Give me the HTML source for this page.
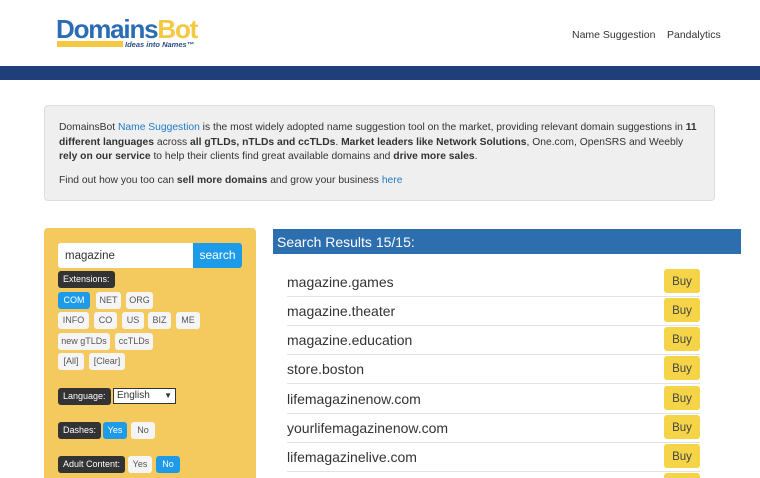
<!DOCTYPE html>
<html><head><style>
*{margin:0;padding:0;box-sizing:border-box}
html,body{width:760px;height:478px;overflow:hidden}
body{background:#fff;font-family:"Liberation Sans",sans-serif;color:#333;position:relative}
.abs{position:absolute}
.logo1{left:56px;top:14px;font-size:26px;font-weight:bold;letter-spacing:-1.2px;color:#2a6db5}
.logo1 span{color:#f5c842}
.bar{left:57px;top:41px;width:66px;height:6px;background:#f5c842}
.tag{left:125px;top:40px;font-size:7.5px;font-style:italic;font-weight:bold;color:#2a4f8a}
.nav{top:29px;font-size:10.5px;color:#333}
.band{left:0;top:66px;width:760px;height:14px;background:#1e3f7a}
.info{left:44px;top:105px;width:671px;height:96px;background:#efefef;border:1px solid #ddd;border-radius:4px;padding:15px 14px;font-size:10.3px;line-height:14.5px;color:#333}
.info a{color:#1e7ac8;text-decoration:none}
.panel{left:44px;top:228px;width:212px;height:260px;background:#f4c95d;border-radius:4px}
.inp{left:58px;top:243px;width:135px;height:25px;background:#fff;border-radius:3px 0 0 3px;font-size:11.5px;padding:7px 7px;color:#333}
.sbtn{left:193px;top:243px;width:49px;height:25px;background:#1e9be8;color:#fff;font-size:12px;text-align:center;line-height:25px;border-radius:0 3px 3px 0}
.lbl{background:#333;color:#fff;font-size:9px;height:17px;line-height:17px;padding:0 5px;border-radius:3px}
.b{height:17px;line-height:17px;font-size:9px;text-align:center;background:#f5f5f5;border-radius:3px;color:#555}
.on{background:#1e9be8;color:#fff}
.sel{left:113px;top:388px;width:63px;height:16px;background:#fff;border:1px solid #333;font-size:10px;line-height:14px;padding-left:3px}
.rh{left:273px;top:229px;width:468px;height:25px;background:#2d6fae;color:#fff;font-size:14px;line-height:26px;padding-left:4px}
.row{left:287px;width:413px;height:29px;border-bottom:1px solid #e3e3e3;font-size:14px;color:#333}
.row span{position:absolute;left:0;top:6px}
.buy{position:absolute;right:0;top:1px;width:36px;height:24px;background:#f5d547;border-radius:3px;font-size:11.5px;text-align:center;line-height:26px;color:#444}
</style></head><body>
<div class="abs logo1">Domains<span>Bot</span></div>
<div class="abs bar"></div>
<div class="abs tag">Ideas into Names™</div>
<div class="abs nav" style="left:572px">Name Suggestion</div>
<div class="abs nav" style="left:667px">Pandalytics</div>
<div class="abs band"></div>
<div class="abs info">DomainsBot <a>Name Suggestion</a> is the most widely adopted name suggestion tool on the market, providing relevant domain suggestions in <b>11 different languages</b> across <b>all gTLDs, nTLDs and ccTLDs</b>. <b>Market leaders like Network Solutions</b>, One.com, OpenSRS and Weebly <b>rely on our service</b> to help their clients find great available domains and <b>drive more sales</b>.<div style="height:9px"></div>Find out how you too can <b>sell more domains</b> and grow your business <a>here</a></div>
<div class="abs panel"></div>
<div class="abs inp">magazine</div>
<div class="abs sbtn">search</div>
<div class="abs lbl" style="left:58px;top:271px">Extensions:</div>
<div class="abs b on" style="left:58px;top:292px;width:32px">COM</div>
<div class="abs b" style="left:96px;top:292px;width:25px">NET</div>
<div class="abs b" style="left:126px;top:292px;width:27px">ORG</div>
<div class="abs b" style="left:58px;top:312px;width:31px">INFO</div>
<div class="abs b" style="left:94px;top:312px;width:23px">CO</div>
<div class="abs b" style="left:122px;top:312px;width:22px">US</div>
<div class="abs b" style="left:148px;top:312px;width:23px">BIZ</div>
<div class="abs b" style="left:176px;top:312px;width:24px">ME</div>
<div class="abs b" style="left:58px;top:333px;width:52px">new gTLDs</div>
<div class="abs b" style="left:115px;top:333px;width:38px">ccTLDs</div>
<div class="abs b" style="left:58px;top:353px;width:26px">[All]</div>
<div class="abs b" style="left:89px;top:353px;width:36px">[Clear]</div>
<div class="abs lbl" style="left:58px;top:388px">Language:</div>
<div class="abs sel">English <span style="float:right;margin-right:3px;font-size:8px">&#9660;</span></div>
<div class="abs lbl" style="left:58px;top:422px">Dashes:</div>
<div class="abs b on" style="left:103px;top:422px;width:24px">Yes</div>
<div class="abs b" style="left:131px;top:422px;width:24px">No</div>
<div class="abs lbl" style="left:58px;top:456px">Adult Content:</div>
<div class="abs b" style="left:128px;top:456px;width:24px">Yes</div>
<div class="abs b on" style="left:156px;top:456px;width:24px">No</div>
<div class="abs rh">Search Results 15/15:</div>
<div class="abs row" style="top:268px"><span>magazine.games</span><div class="buy">Buy</div></div>
<div class="abs row" style="top:297px"><span>magazine.theater</span><div class="buy">Buy</div></div>
<div class="abs row" style="top:326px"><span>magazine.education</span><div class="buy">Buy</div></div>
<div class="abs row" style="top:355px"><span>store.boston</span><div class="buy">Buy</div></div>
<div class="abs row" style="top:385px"><span>lifemagazinenow.com</span><div class="buy">Buy</div></div>
<div class="abs row" style="top:414px"><span>yourlifemagazinenow.com</span><div class="buy">Buy</div></div>
<div class="abs row" style="top:443px"><span>lifemagazinelive.com</span><div class="buy">Buy</div></div>
<div class="abs row" style="top:472px"><span></span><div class="buy">Buy</div></div>
</body></html>
